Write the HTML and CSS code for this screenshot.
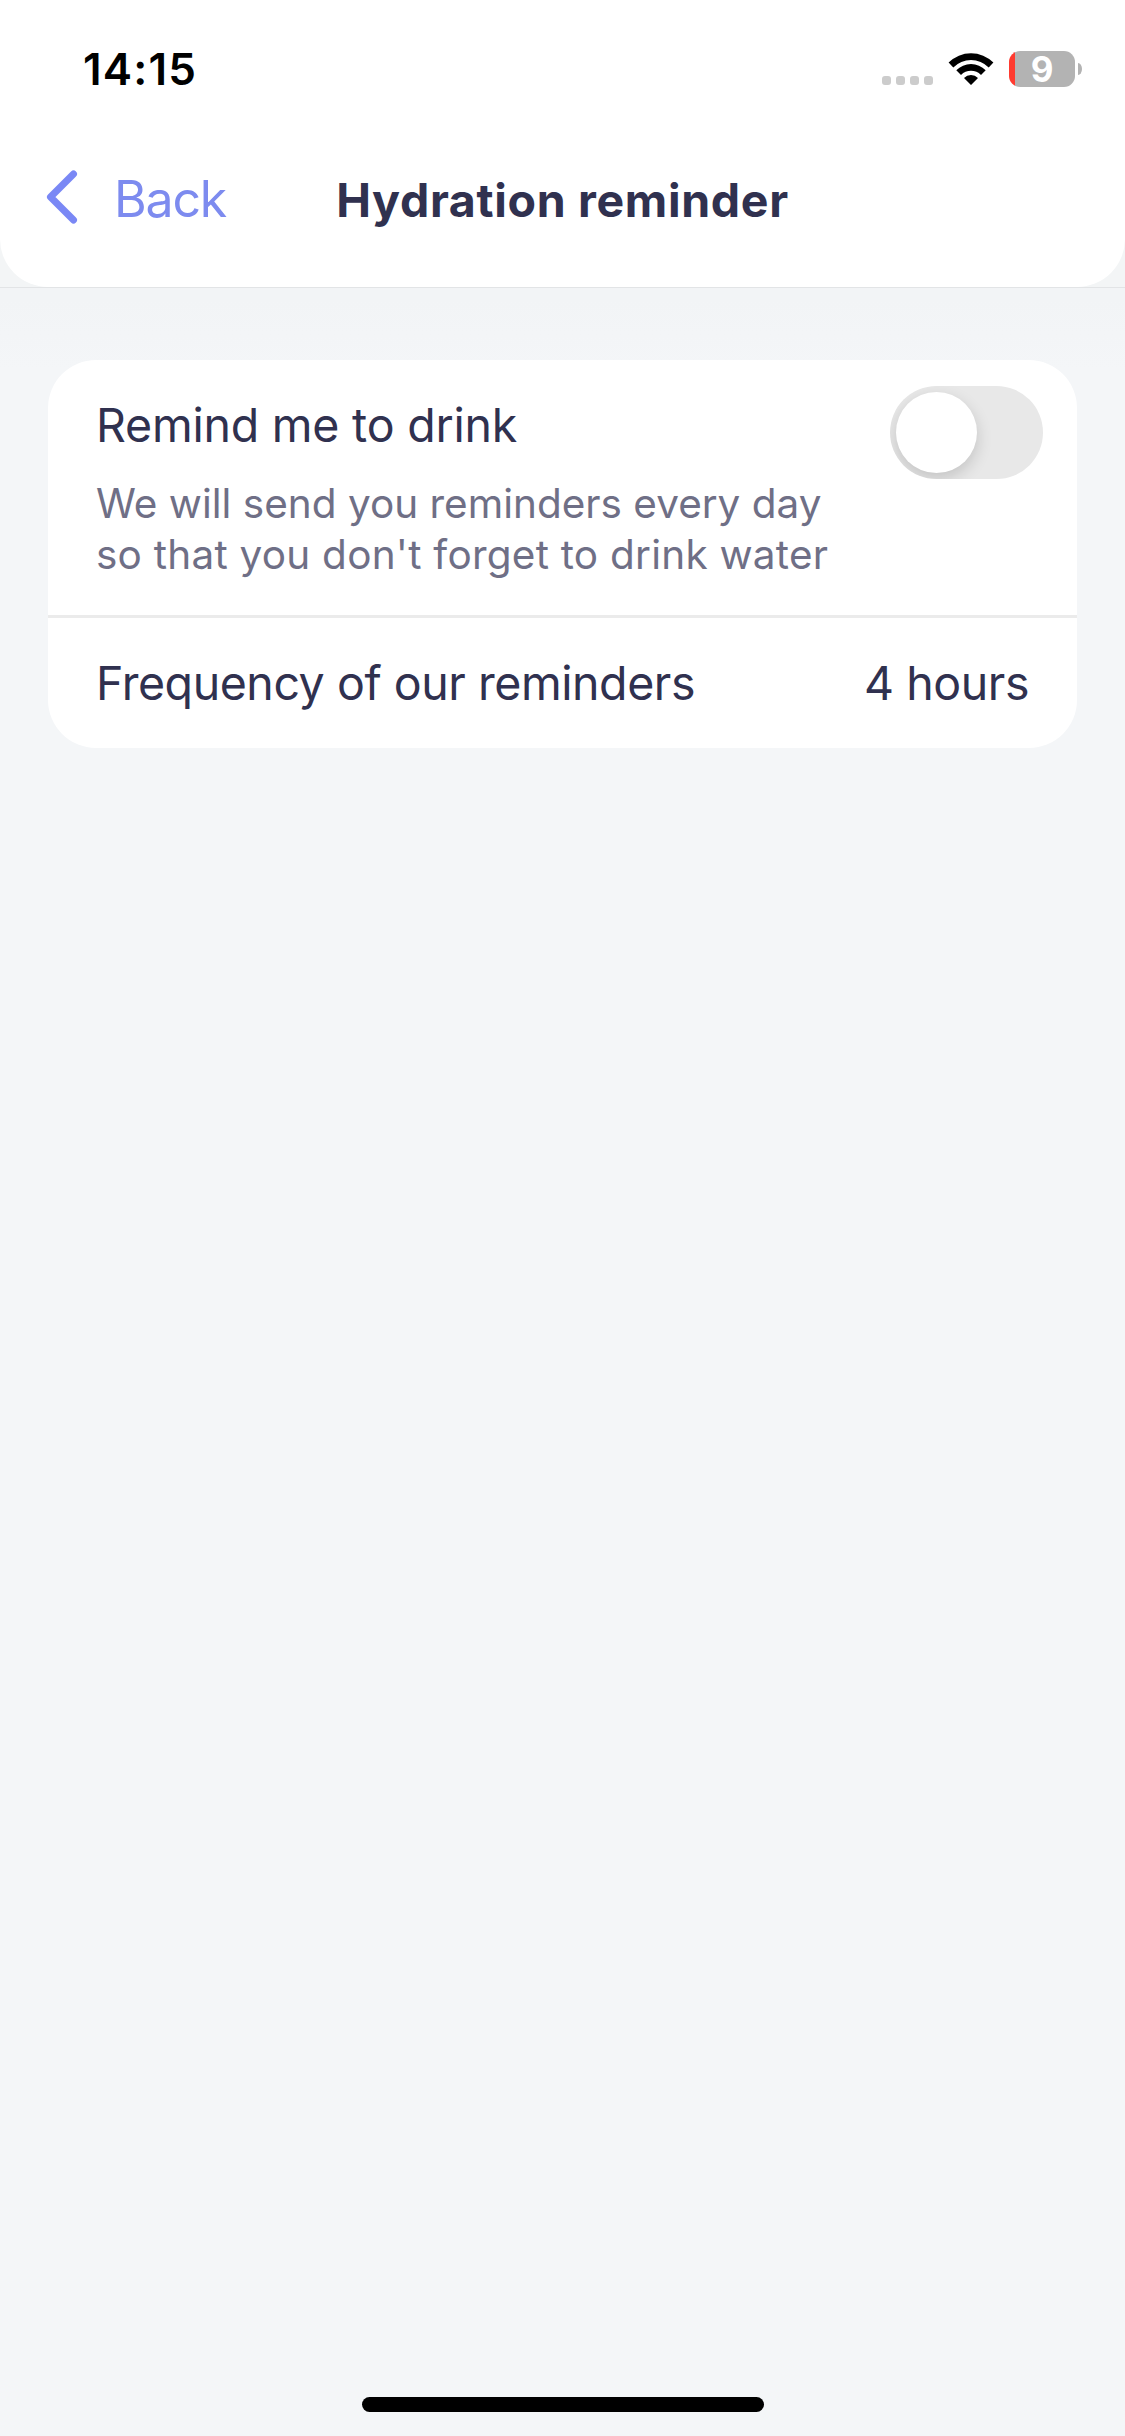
FILE: index.html
```html
<!DOCTYPE html>
<html lang="en">
<head>
<meta charset="utf-8">
<title>Hydration reminder</title>
<link rel="stylesheet" href="styles.css">
</head>
<body>
<div class="screen">
  <div class="header-wrap">
    <header class="header">
      <div class="status">
        <span class="time">14:15</span>
        <div class="indicators">
          <span class="dots"><i></i><i></i><i></i><i></i></span>
          <svg class="wifi" width="46" height="33" viewBox="0 0 46 33"><path d="M0.6 10.6a31.500 31.500 0 0 1 44.800 0L40.700 15.400a25 25 0 0 0-35.400 0ZM8.300 18.200a20.800 20.800 0 0 1 29.400 0L33 22.900a14.200 14.200 0 0 0-20 0ZM16 26a9.900 9.900 0 0 1 14 0L23 33Z"/></svg>
          <span class="battery"><b>9</b></span>
          <span class="nub"></span>
        </div>
      </div>
      <nav class="nav">
        <a class="back"><svg width="32" height="54" viewBox="0 0 32 54"><path d="M27.500 4 4.500 27 27.500 50"/></svg><span class="back-label">Back</span></a>
        <h1 class="title">Hydration reminder</h1>
      </nav>
    </header>
  </div>
  <main class="card">
    <section class="row remind">
      <div class="copy">
        <div class="label remind-label">Remind me to drink</div>
        <p class="hint">We will send you reminders every day<br><span class="hint-end">so that you don't forget to drink water</span></p>
      </div>
      <div class="toggle"><span class="knob"></span></div>
    </section>
    <section class="row frequency">
      <span class="label freq-label">Frequency of our reminders</span>
      <span class="label value">4 hours</span>
    </section>
  </main>
  <div class="home"></div>
</div>
</body>
</html>
```
FILE: styles.css
```css
* { box-sizing: border-box; }
body { margin: 0; font-family: Inter, "Liberation Sans", sans-serif; color: #30314f; }
.screen { display: flex; flex-direction: column; height: 2436px; background: linear-gradient(#f2f4f6 300px, #f4f6f8 370px); }
.header-wrap { height: 288px; border-bottom: 1px solid #e2e4e6; background: #f3f5f6; }
.header { height: 287px; background: #fff; border-radius: 0 0 48px 48px; }
.status { display: flex; justify-content: space-between; height: 141px; padding: 51px 43px 0 83px; }
.time { font-size: 44px; font-weight: 600; line-height: 36px; letter-spacing: 1.2px; color: #000; }
.indicators { display: flex; height: 36px; }
.dots { display: flex; gap: 5px; margin: 25px 15px 0 0; }
.dots i { width: 9px; height: 9px; border-radius: 3px; background: #ccc; }
.wifi { margin: 1px 15px 0 0; }
.battery { width: 66px; height: 36px; border-radius: 11px; background: linear-gradient(90deg, #ff3b30 6px, #b3b3b3 6px); text-align: center; color: #fff; font-size: 35px; line-height: 36px; }
.nub { width: 4px; height: 12px; margin: 12px 0 0 3px; border-radius: 0 4px 4px 0 / 0 6px 6px 0; background: #b3b3b3; }
.nav { display: grid; grid-template-columns: minmax(0, 1fr) auto minmax(0, 1fr); align-items: center; height: 118px; padding: 0 46px; }
.back { display: flex; align-items: center; gap: 36px; font-size: 50px; color: #7d8bef; }
.back svg { margin-bottom: 6px; }
.back path { fill: none; stroke: #7a88f5; stroke-width: 7; stroke-linecap: round; stroke-linejoin: round; }
.back-label { padding-bottom: 2px; letter-spacing: -1.2px; }
.title { margin: 0; font-size: 46.500px; font-weight: 700; letter-spacing: 0.67px; }
.card { margin: 72px 48px 0; background: #fff; border-radius: 48px; }
.row { display: flex; justify-content: space-between; }
.remind { height: 258px; padding: 26px 34px 0 48px; border-bottom: 3px solid #ebebeb; }
.copy { padding-top: 9px; }
.label { font-size: 46.500px; line-height: 60px; }
.remind-label { letter-spacing: -0.22px; }
.freq-label, .value { letter-spacing: -0.44px; }
.hint { margin: 23px 0 0; font-size: 40.500px; line-height: 51px; color: #6f6f86; }
.hint-end { letter-spacing: 0.24px; }
.toggle { width: 153px; height: 93px; border-radius: 47px; background: #e8e8e8; padding: 6px; overflow: hidden; }
.knob { display: block; width: 81px; height: 81px; border-radius: 50%; background: #fff; box-shadow: 0 6px 16px rgba(0,0,0,.16); }
.frequency { height: 130px; padding: 0 48px; align-items: center; }
.home { width: 402px; height: 15px; margin: auto auto 24px; border-radius: 8px; background: #000; }
```
